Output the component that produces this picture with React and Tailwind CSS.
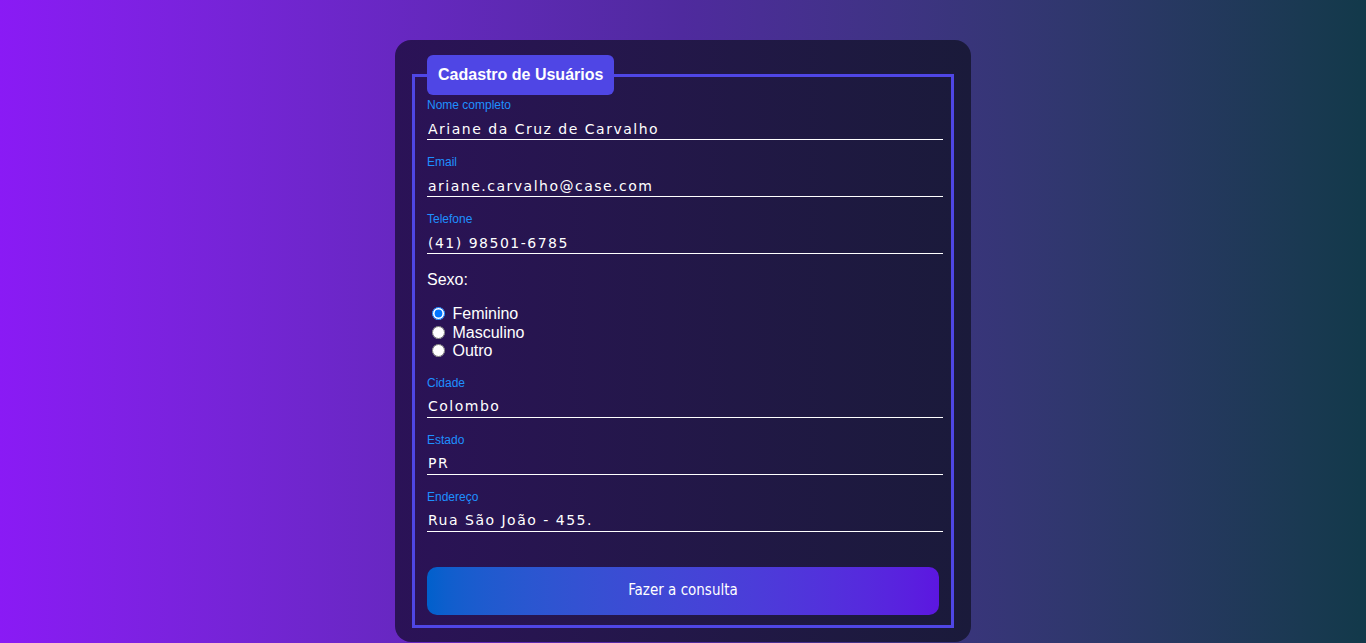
import { useState } from 'react';

const fields = [
  { id: 'nome', label: 'Nome completo', value: 'Ariane da Cruz de Carvalho' },
  { id: 'email', label: 'Email', value: 'ariane.carvalho@case.com' },
  { id: 'telefone', label: 'Telefone', value: '(41) 98501-6785' },
];

const fields2 = [
  { id: 'cidade', label: 'Cidade', value: 'Colombo' },
  { id: 'estado', label: 'Estado', value: 'PR' },
  { id: 'endereco', label: 'Endereço', value: 'Rua São João - 455.' },
];

function Field({ id, label, value }) {
  return (
    <div className="mb-[15px]">
      <label htmlFor={id} className="block text-[12px] leading-[14px] text-[#1e90ff]">
        {label}
      </label>
      <input
        id={id}
        defaultValue={value}
        className="block w-[516px] h-[28px] pt-[6px] px-[1px] bg-transparent text-white border-b border-white outline-none text-[14px] tracking-[1.5px] font-['DejaVu_Sans',sans-serif]"
      />
    </div>
  );
}

export default function App() {
  const [sexo, setSexo] = useState('feminino');

  return (
    <div className="min-h-[643px] w-full bg-gradient-to-r from-[#8a1af5] via-[#4f2a9e] to-[#12394a] pt-[40px] font-['Liberation_Sans',Arial,sans-serif]">
      <div className="mx-auto w-[576px] rounded-[16px] bg-gradient-to-r from-[#2b1257] to-[#1a1a3a] px-[17px] pt-[15px] pb-[14px]">
        <fieldset className="border-[3px] border-[#4f46e5] pl-[12px] pr-[8px] pb-[10px]">
          <legend className="bg-[#4f46e5] rounded-[6px] px-[11px] h-[40px] leading-[40px] text-white font-bold text-[16px]">
            Cadastro de Usuários
          </legend>
          <div className="pt-[3px]">
            {fields.map((f) => (
              <Field key={f.id} {...f} />
            ))}
            <p className="text-white text-[16px] leading-[18px] mt-[17px]">Sexo:</p>
            <div className="mt-[16px] mb-[15px] text-white text-[16px] leading-[18.5px]">
              {['Feminino', 'Masculino', 'Outro'].map((s) => (
                <label key={s} className="block">
                  <input
                    type="radio"
                    name="sexo"
                    checked={sexo === s.toLowerCase()}
                    onChange={() => setSexo(s.toLowerCase())}
                    className="ml-[5px] mr-[3px] align-[-1px]"
                  />{' '}
                  {s}
                </label>
              ))}
            </div>
            {fields2.map((f) => (
              <Field key={f.id} {...f} />
            ))}
            <button className="mt-[20px] w-[512px] h-[48px] rounded-[10px] bg-gradient-to-r from-[#0060cc] to-[#5c16e0] text-white text-[15px] font-['DejaVu_Sans_Condensed','DejaVu_Sans',sans-serif]">
              Fazer a consulta
            </button>
          </div>
        </fieldset>
      </div>
    </div>
  );
}
